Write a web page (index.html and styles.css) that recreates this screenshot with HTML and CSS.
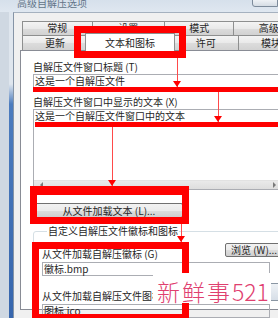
FILE: index.html
```html
<!DOCTYPE html>
<html lang="zh-CN">
<head>
    <meta charset="UTF-8">
    <meta name="viewport" content="width=device-width, initial-scale=1.0">
    <title>高级自解压选项</title>
    <link rel="stylesheet" href="styles.css">
</head>
<body>

<div class="window">
    <div class="titlebar">
        <span class="title">高级自解压选项</span>
        <span class="caption-btn"></span>
    </div>

    <div class="frame">
        <div class="edge"><div class="edge-strip"></div></div>

        <div class="client">
            <div class="tabs">
                <div class="tab-row">
                    <div class="tab w71">常规</div>
                    <div class="tab w73">设置</div>
                    <div class="tab w71">模式</div>
                    <div class="tab w71">高级</div>
                </div>
                <div class="tab-row front">
                    <div class="tab w67">更新</div>
                    <div class="tab active">文本和图标</div>
                    <div class="tab w67">许可</div>
                    <div class="tab w67">模块</div>
                </div>
            </div>

            <div class="panel">
                <div class="field-label">自解压文件窗口标题 (T)</div>
                <div class="text-input">这是一个自解压文件</div>

                <div class="field-label gap">自解压文件窗口中显示的文本 (X)</div>
                <div class="text-area">
                    <div class="text-line">这是一个自解压文件窗口中的文本</div>
                    <div class="hscroll">
                        <span class="arrow-left"></span>
                        <span class="arrow-right"></span>
                    </div>
                </div>

                <div class="action-btn">从文件加载文本 (L)...</div>

                <fieldset class="group">
                    <legend>自定义自解压文件徽标和图标</legend>
                    <div class="pick-row">
                        <div class="pick-label first">从文件加载自解压徽标 (G)</div>
                        <div class="browse-btn">浏览 (W)...</div>
                    </div>
                    <div class="text-input narrow">徽标.bmp</div>
                    <div class="pick-row">
                        <div class="pick-label second">从文件加载自解压文件图标 (I)</div>
                        <div class="browse-btn small"></div>
                    </div>
                    <div class="text-input narrow">图标.ico</div>
                </fieldset>
            </div>
        </div>
    </div>

    <!-- red annotation marks drawn over the dialog -->
    <div class="mark box box-tab"></div>
    <div class="mark pointer p1"></div>
    <div class="mark bar bar1"></div>
    <div class="mark pointer p2"></div>
    <div class="mark bar bar2"></div>
    <div class="mark pointer p3"></div>
    <div class="mark box box-btn"></div>
    <div class="mark pointer p4"></div>
    <div class="mark box box-icon"></div>

    <div class="watermark"><span class="wm-cn">新鲜事</span>521</div>
</div>

</body>
</html>
```

FILE: styles.css
```css
* {
    box-sizing: border-box;
}

body {
    margin: 0;
    background-color: #d3dce6;
    font-family: "Noto Sans CJK SC", "Liberation Sans", sans-serif;
    font-size: 10px;
    color: #262626;
}

.window {
    position: relative;
    width: 278px;
    height: 318px;
    overflow: hidden;
    background-color: #d3dce6;
}

.titlebar {
    height: 12px;
    display: flex;
    justify-content: space-between;
    padding-left: 17px;
    background: linear-gradient(#d6e0eb, #dfe7f0);
    overflow: hidden;
}

.title {
    margin-top: -3px;
    line-height: 12px;
    color: #627488;
}

.caption-btn {
    width: 26px;
    height: 8px;
    margin-top: -1px;
    border: 1px solid #7d8b9b;
    border-radius: 0 0 0 3px;
    background: linear-gradient(#eef1f5, #d5dce4);
}

.frame {
    display: flex;
    height: 306px;
}

.edge {
    width: 13px;
    flex: none;
    background-color: #cfd8e2;
}

.edge-strip {
    width: 4px;
    height: 100%;
    margin-left: 9px;
    background: linear-gradient(#dfe6ee 0, #dfe6ee 72px, #4c7cbe 92px, #3766ad 100%);
}

.client {
    width: 290px;
    flex: none;
    background-color: #f0f0f0;
    border-left: 1px solid #8594a6;
    border-top: 1px solid #a5b1bf;
    padding: 8px 0 0 6px;
}

/* tabs */

.tabs {
    margin-left: 2px;
}

.tab-row {
    display: flex;
    align-items: flex-start;
}

.tab {
    height: 14px;
    margin-right: -1px;
    border: 1px solid #8e8f8f;
    border-bottom: none;
    background: linear-gradient(#f4f4f4, #e9e9e9 50%, #dcdcdc 51%, #d2d2d2);
    text-align: center;
    line-height: 12px;
}

.tab-row.front .tab {
    height: 15px;
    line-height: 14px;
}

.w67 { width: 67px; }
.w71 { width: 71px; }
.w73 { width: 74px; }

.tab-row.front .tab.active {
    position: relative;
    z-index: 1;
    width: 91px;
    height: 18px;
    margin: -2px -2px -1px -2px;
    background: #ffffff;
    line-height: 18px;
}

/* tab page */

.panel {
    height: 260px;
    border: 1px solid #898c95;
    background-color: #ffffff;
    padding: 10px 0 0 12px;
}

.field-label {
    line-height: 12px;
    margin-bottom: 1px;
}

.field-label.gap {
    margin-top: 8px;
}

.text-input {
    width: 248px;
    height: 14px;
    border: 1px solid #abadb3;
    padding-left: 1px;
    line-height: 12px;
}

.text-area {
    width: 248px;
    height: 81px;
    border: 1px solid #abadb3;
    display: flex;
    flex-direction: column;
    justify-content: space-between;
}

.text-line {
    padding-left: 1px;
    line-height: 12px;
}

.hscroll {
    height: 9px;
    display: flex;
    justify-content: space-between;
    align-items: center;
    padding: 0 4px 0 6px;
    background: linear-gradient(#eaeaea, #dedede);
    border-top: 1px solid #e2e2e2;
}

.arrow-left,
.arrow-right {
    width: 0;
    height: 0;
    border-top: 3px solid transparent;
    border-bottom: 3px solid transparent;
}

.arrow-left {
    border-right: 3px solid #7a7a7a;
}

.arrow-right {
    border-left: 3px solid #7a7a7a;
}

.action-btn {
    width: 148px;
    height: 15px;
    margin: 13px 0 0 2px;
    border: 1px solid #707070;
    border-radius: 2px;
    background: linear-gradient(#f2f2f2, #ebebeb 50%, #dddddd 51%, #cfcfcf);
    text-align: center;
    line-height: 13px;
}

.group {
    width: 250px;
    margin: 7px 0 0 0;
    padding: 0 0 0 8px;
    border: 1px solid #d5dfe5;
    border-radius: 3px;
}

.group legend {
    margin-left: 5px;
    padding: 0 1px;
    line-height: 12px;
}

.pick-row {
    display: flex;
    justify-content: space-between;
    align-items: flex-start;
}

.pick-label {
    line-height: 12px;
}

.pick-label.first {
    margin-top: 11px;
}

.pick-label.second {
    margin-top: 14px;
}

.browse-btn {
    width: 57px;
    height: 14px;
    margin-top: 6px;
    border: 1px solid #707070;
    border-radius: 2px;
    background: linear-gradient(#f2f2f2, #ebebeb 50%, #dddddd 51%, #cfcfcf);
    padding-left: 5px;
    line-height: 12px;
}

.browse-btn.small {
    width: 14px;
    height: 18px;
    margin-top: 7px;
    background: linear-gradient(#eef2f6, #d6dee7);
    border-color: #8a96a3;
}

.text-input.narrow {
    width: 228px;
    margin-top: 2px;
}

/* annotations */

.mark {
    position: absolute;
    z-index: 5;
}

.box {
    border: 7px solid #ff0000;
}

.box-tab {
    left: 74px;
    top: 26px;
    width: 112px;
    height: 32px;
}

.box-btn {
    left: 30px;
    top: 186px;
    width: 159px;
    height: 38px;
    border-top-width: 9px;
}

.box-icon {
    left: 32px;
    top: 242px;
    width: 157px;
    height: 79px;
}

.bar {
    height: 5px;
    background-color: #ff0000;
}

.bar1 {
    left: 33px;
    top: 87px;
    width: 245px;
}

.bar2 {
    left: 35px;
    top: 122px;
    width: 243px;
}

.pointer {
    width: 1px;
    background-color: #ff4a4a;
}

.pointer::after {
    content: "";
    position: absolute;
    left: -4px;
    bottom: 0;
    border-left: 4.5px solid transparent;
    border-right: 4.5px solid transparent;
    border-top: 6px solid #ff0000;
}

.p1 {
    left: 177px;
    top: 58px;
    height: 29px;
}

.p2 {
    left: 218px;
    top: 92px;
    height: 30px;
}

.p3 {
    left: 112px;
    top: 127px;
    height: 59px;
}

.p4 {
    left: 181px;
    top: 224px;
    height: 18px;
}

.watermark {
    position: absolute;
    z-index: 6;
    left: 153px;
    top: 273px;
    width: 118px;
    height: 30px;
    padding: 6px 0 0 4px;
    background-color: #ffffff;
    color: #e0406f;
    font-size: 23px;
    font-weight: 300;
    line-height: 24px;
    white-space: nowrap;
}

.wm-cn {
    letter-spacing: 2px;
}
```
